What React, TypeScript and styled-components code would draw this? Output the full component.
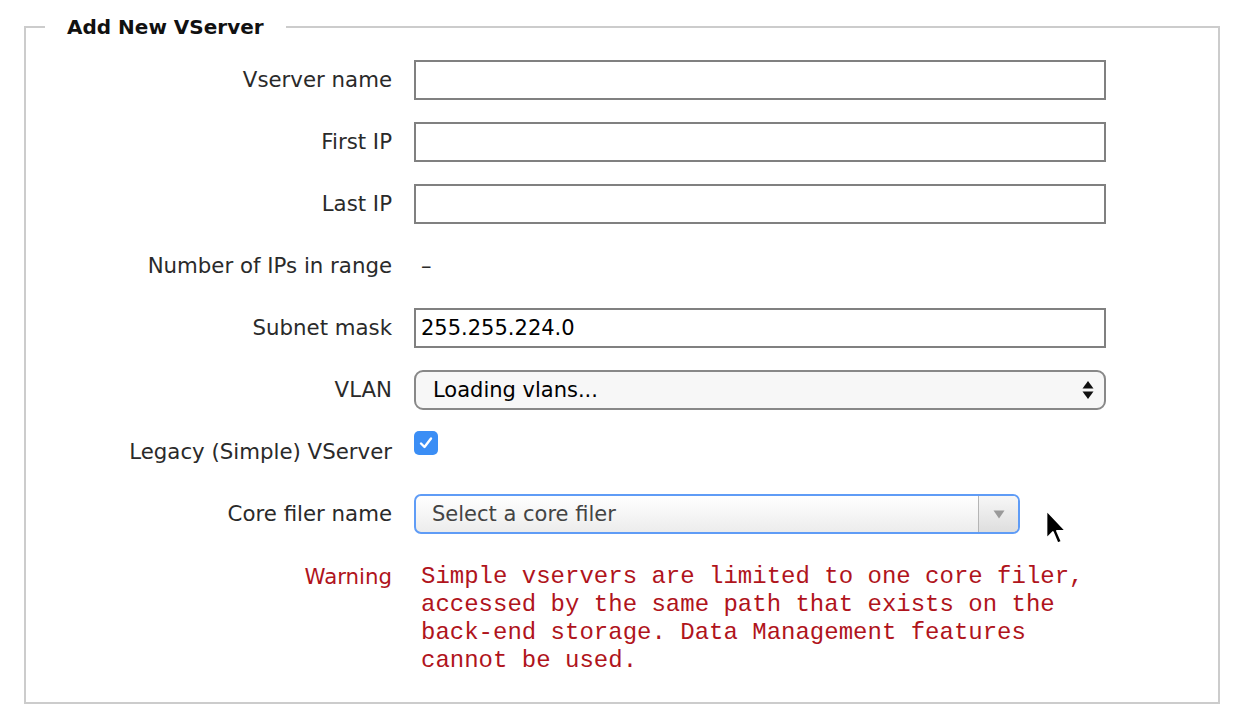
import React from "react";
import styled, { createGlobalStyle } from "styled-components";

const GlobalStyle = createGlobalStyle`
  html, body { margin: 0; padding: 0; background: #ffffff; }
  body { font-family: "DejaVu Sans", Verdana, sans-serif; }
`;

const Page = styled.div`
  padding: 15px 22px 24px 24px;
`;

const Fieldset = styled.fieldset`
  margin: 0;
  padding: 21px 0 27px 0;
  border: 2px solid #cccccc;
  min-width: 0;
`;

const Legend = styled.legend`
  margin-left: 19px;
  padding: 0 22px;
  font-family: "DejaVu Sans", Verdana, sans-serif;
  font-weight: bold;
  font-size: 20px;
  line-height: 24px;
  color: #111111;
`;

const FormGrid = styled.div`
  display: grid;
  grid-template-columns: 366px 1fr;
  column-gap: 22px;
  row-gap: 22px;
`;

const Label = styled.div<{ $warn?: boolean; $top?: boolean }>`
  justify-self: end;
  align-self: ${(p) => (p.$top ? "start" : "center")};
  padding-top: ${(p) => (p.$top ? "7px" : "0")};
  font-size: 21.3px;
  line-height: 28px;
  color: ${(p) => (p.$warn ? "#b0141c" : "#2a2a2a")};
  white-space: nowrap;
`;

const Cell = styled.div`
  height: 40px;
  display: flex;
  align-items: center;
`;

const TopCell = styled.div`
  height: 40px;
  display: flex;
  align-items: flex-start;
`;

const TextInput = styled.input`
  box-sizing: border-box;
  width: 692px;
  height: 40px;
  margin: 0;
  border: 2px solid #808080;
  border-radius: 0;
  padding: 0 5px;
  font-family: "DejaVu Sans", Verdana, sans-serif;
  font-size: 21px;
  color: #000000;
  background: #ffffff;
  outline: none;
`;

const PlainValue = styled.span`
  padding-left: 7px;
  font-size: 21px;
  color: #2a2a2a;
`;

const SelectBox = styled.div`
  box-sizing: border-box;
  width: 692px;
  height: 40px;
  border: 2px solid #888888;
  border-radius: 9px;
  background: #f7f7f7;
  display: flex;
  align-items: center;
  justify-content: space-between;
  padding: 0 10px 0 17px;
  font-size: 21px;
  color: #000000;
`;

const CheckBox = styled.span`
  box-sizing: border-box;
  width: 24px;
  height: 24px;
  margin-top: -1px;
  border-radius: 5px;
  background: #3b8ef5;
  display: flex;
  align-items: center;
  justify-content: center;
`;

const ComboBox = styled.div`
  box-sizing: border-box;
  width: 606px;
  height: 40px;
  border: 2px solid #5f9cf6;
  border-radius: 7px;
  background: linear-gradient(#ffffff, #ececec);
  display: flex;
  align-items: stretch;
  overflow: hidden;
`;

const ComboText = styled.span`
  flex: 1;
  display: flex;
  align-items: center;
  padding-left: 16px;
  font-size: 21px;
  color: #444444;
`;

const ComboArrow = styled.span`
  width: 39px;
  border-left: 1px solid #b5b5b5;
  display: flex;
  align-items: center;
  justify-content: center;
  background: linear-gradient(#f7f7f7, #dedede);
`;

const Pointer = styled.svg`
  margin-left: 24px;
  margin-top: 14px;
  margin-bottom: -14px;
  flex: none;
`;

const WarningText = styled.div`
  box-sizing: border-box;
  width: 692px;
  padding: 7px 0 0 7px;
  font-family: "Liberation Mono", "Courier New", monospace;
  font-size: 24px;
  line-height: 28px;
  color: #b0141c;
`;

export default function App() {
  return (
    <>
      <GlobalStyle />
      <Page>
        <Fieldset>
          <Legend>Add New VServer</Legend>
          <FormGrid>
            <Label>Vserver name</Label>
            <Cell>
              <TextInput type="text" defaultValue="" />
            </Cell>

            <Label>First IP</Label>
            <Cell>
              <TextInput type="text" defaultValue="" />
            </Cell>

            <Label>Last IP</Label>
            <Cell>
              <TextInput type="text" defaultValue="" />
            </Cell>

            <Label>Number of IPs in range</Label>
            <Cell>
              <PlainValue>–</PlainValue>
            </Cell>

            <Label>Subnet mask</Label>
            <Cell>
              <TextInput type="text" defaultValue="255.255.224.0" />
            </Cell>

            <Label>VLAN</Label>
            <Cell>
              <SelectBox>
                <span>Loading vlans...</span>
                <svg width="12" height="20" viewBox="0 0 12 20">
                  <path d="M6 1 L11.5 8.5 L0.5 8.5 Z" fill="#111" />
                  <path d="M6 19 L11.5 11.5 L0.5 11.5 Z" fill="#111" />
                </svg>
              </SelectBox>
            </Cell>

            <Label>Legacy (Simple) VServer</Label>
            <TopCell>
              <CheckBox>
                <svg width="16" height="16" viewBox="0 0 16 16">
                  <path
                    d="M3 8.5 L6.5 12 L13 3.5"
                    fill="none"
                    stroke="#ffffff"
                    strokeWidth="2.4"
                    strokeLinecap="round"
                    strokeLinejoin="round"
                  />
                </svg>
              </CheckBox>
            </TopCell>

            <Label>Core filer name</Label>
            <TopCell>
              <ComboBox>
                <ComboText>Select a core filer</ComboText>
                <ComboArrow>
                  <svg width="12" height="9" viewBox="0 0 12 9">
                    <path d="M0.5 0.5 L11.5 0.5 L6 8.5 Z" fill="#9a9a9a" />
                  </svg>
                </ComboArrow>
              </ComboBox>
              <Pointer width="26" height="40" viewBox="0 0 22 34">
                <path
                  d="M2 2 L2 26 L7.5 20.5 L11.5 30 L15 28.5 L11 19.5 L18.5 19.5 Z"
                  fill="#000000"
                  stroke="#ffffff"
                  strokeWidth="1.6"
                  strokeLinejoin="round"
                />
              </Pointer>
            </TopCell>

            <Label $warn $top>
              Warning
            </Label>
            <WarningText>
              Simple vservers are limited to one core filer, accessed by the
              same path that exists on the back-end storage. Data Management
              features cannot be used.
            </WarningText>
          </FormGrid>
        </Fieldset>
      </Page>
    </>
  );
}
